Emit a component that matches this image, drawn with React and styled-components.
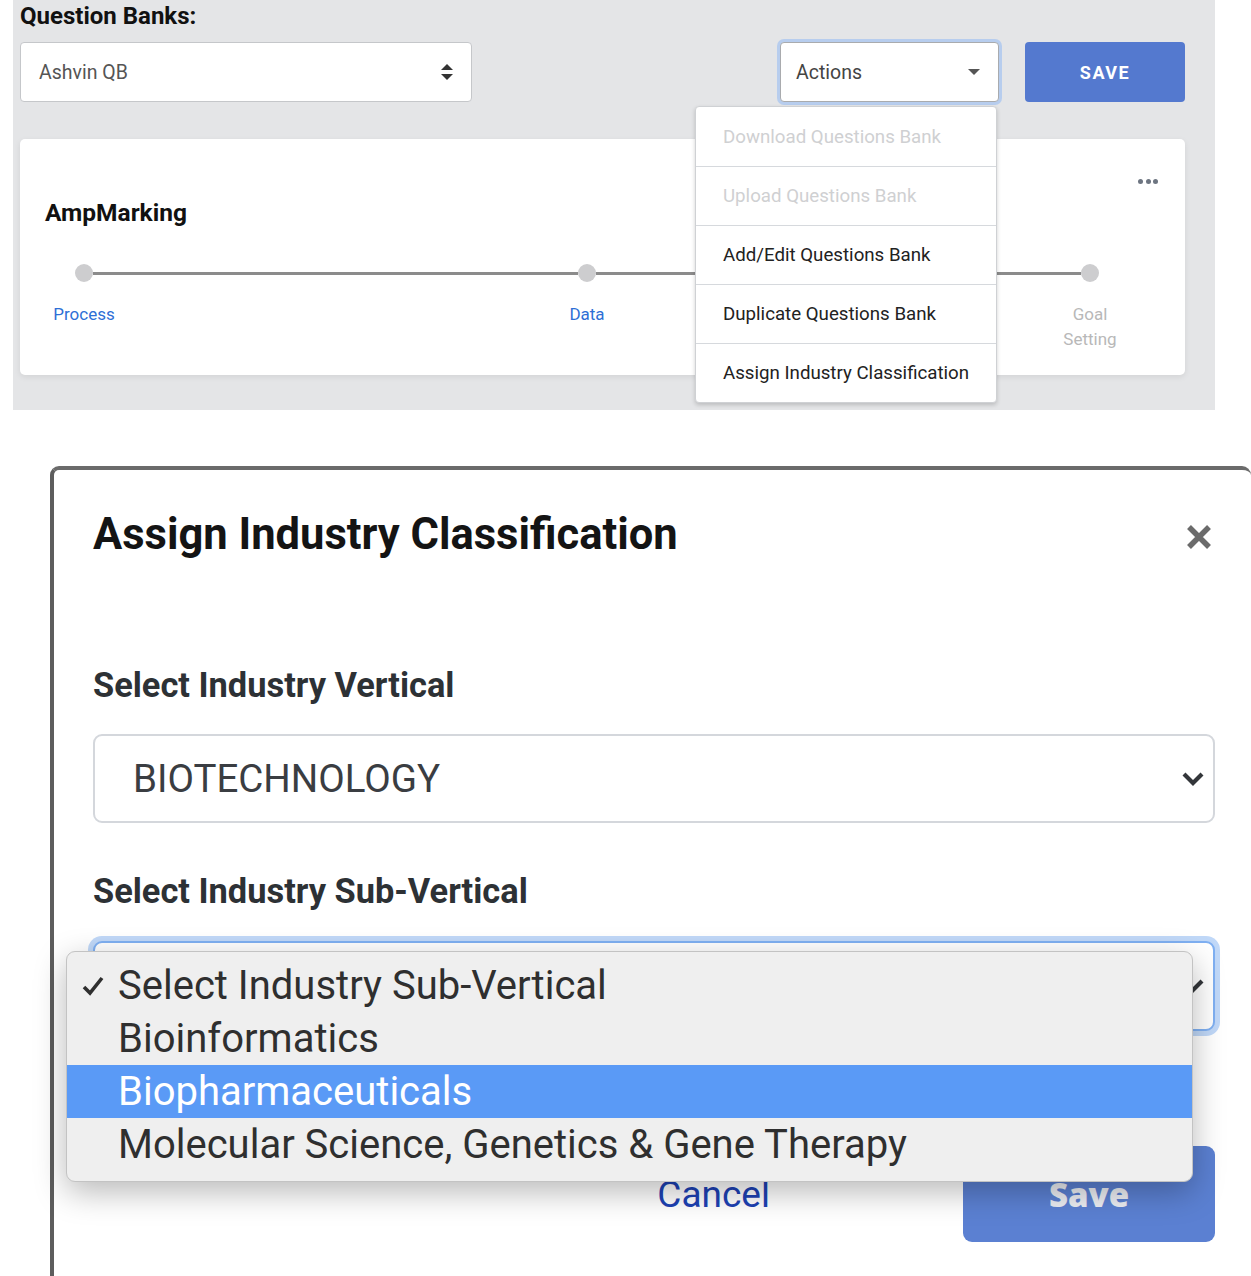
import React from "react";
import styled, { createGlobalStyle, css } from "styled-components";

const GlobalStyle = createGlobalStyle`
  html, body { margin: 0; padding: 0; background: #ffffff; }
  body { font-family: Roboto, "Liberation Sans", Arial, sans-serif; }
  * { box-sizing: border-box; }
`;

const Page = styled.div`
  width: 1251px;
  height: 1276px;
  overflow: hidden;
  background: #ffffff;
  display: flex;
  flex-direction: column;
`;

/* ---------- top panel ---------- */
const TopPanel = styled.section`
  margin-left: 13px;
  width: 1202px;
  height: 410px;
  background: #e4e5e7;
  padding: 0 30px 0 7px;
  display: flex;
  flex-direction: column;
`;

const PanelTitle = styled.h2`
  margin: 0;
  font-size: 24px;
  line-height: 32px;
  font-weight: 700;
  color: #111;
`;

const Toolbar = styled.div`
  margin-top: 10px;
  display: flex;
  align-items: center;
  height: 60px;
`;

const BankSelect = styled.div`
  width: 452px;
  height: 60px;
  background: #fff;
  border: 1px solid #c5c7ca;
  border-radius: 4px;
  display: flex;
  align-items: center;
  justify-content: space-between;
  padding: 0 18px 0 18px;
  font-size: 19.5px;
  color: #555;
`;

const Spacer = styled.div`
  flex: 1;
`;

const ActionsBox = styled.div`
  position: relative;
  width: 219px;
  height: 60px;
  background: #fff;
  border: 1px solid #a9abae;
  border-radius: 4px;
  box-shadow: 0 0 0 3px #b7cdee;
  display: flex;
  align-items: center;
  justify-content: space-between;
  padding: 0 18px 0 15px;
  font-size: 19.5px;
  color: #444;
  margin-right: 26px;
`;

const Menu = styled.ul`
  position: absolute;
  top: calc(100% + 5px);
  right: 1px;
  width: 302px;
  margin: 0;
  padding: 0;
  list-style: none;
  background: #fff;
  border: 1px solid #cfd1d4;
  border-radius: 4px;
  box-shadow: 0 2px 4px rgba(0, 0, 0, 0.18);
  z-index: 5;
`;

const MenuItem = styled.li`
  height: 59px;
  display: flex;
  align-items: center;
  padding-left: 27px;
  font-size: 18.7px;
  color: ${(p) => (p.$disabled ? "#cfd0d2" : "#222")};
  & + & {
    border-top: 1px solid #d6d9dd;
  }
`;

const PrimaryButton = styled.button`
  width: 160px;
  height: 60px;
  border: none;
  border-radius: 4px;
  background: #5479cf;
  color: #fff;
  font-family: Roboto, sans-serif;
  font-weight: 700;
  font-size: 18px;
  letter-spacing: 1.5px;
`;

const Card = styled.div`
  margin-top: 37px;
  height: 236px;
  background: #fff;
  border-radius: 5px;
  box-shadow: 0 2px 6px rgba(0, 0, 0, 0.08);
  padding: 36px 27px 0 25px;
  display: flex;
  flex-direction: column;
`;

const CardMenuRow = styled.div`
  display: flex;
  justify-content: flex-end;
  height: 12px;
  align-items: center;
`;

const Dot = styled.span`
  width: 5px;
  height: 5px;
  border-radius: 50%;
  background: #6d7581;
  & + & {
    margin-left: 2.5px;
  }
`;

const CardTitle = styled.h3`
  margin: 11px 0 0 0;
  font-size: 24.5px;
  line-height: 30px;
  font-weight: 700;
  color: #111;
`;

const Stepper = styled.div`
  margin: 36px 32px 0 3px;
  display: flex;
  align-items: flex-start;
`;

const Step = styled.div`
  width: 72px;
  display: flex;
  flex-direction: column;
  align-items: center;
`;

const StepDot = styled.span`
  width: 18px;
  height: 18px;
  border-radius: 50%;
  background: #cdcdcf;
`;

const Connector = styled.span`
  flex: 1;
  height: 3px;
  margin: 7.5px -27px 0;
  background: #8b8b8b;
`;

const StepLabel = styled.span`
  margin-top: 20px;
  font-size: 17px;
  line-height: 25px;
  text-align: center;
  color: ${(p) => (p.$muted ? "#b8b8b8" : "#2e6fd6")};
`;

/* ---------- modal ---------- */
const Modal = styled.section`
  margin-top: 56px;
  margin-left: 50px;
  width: 1201px;
  flex: 1;
  background: #fff;
  border-left: 4px solid #5d5d5d;
  border-top: 4px solid #6b6b6b;
  border-radius: 9px 9px 0 0;
  padding: 37px 36px 0 39px;
  display: flex;
  flex-direction: column;
`;

const ModalHeader = styled.div`
  display: flex;
  align-items: center;
  justify-content: space-between;
  height: 56px;
`;

const ModalTitle = styled.h1`
  margin: 0;
  font-size: 43.5px;
  line-height: 56px;
  font-weight: 700;
  color: #141414;
`;

const CloseButton = styled.button`
  border: none;
  background: none;
  padding: 0;
  margin-right: 3px;
  margin-top: 4px;
  width: 26px;
  height: 26px;
  display: flex;
`;

const FieldLabel = styled.h4`
  margin: ${(p) => p.$mt}px 0 0 0;
  font-size: 34.4px;
  line-height: 40px;
  font-weight: 700;
  color: #2d3135;
`;

const SelectBox = styled.div`
  position: relative;
  margin-top: ${(p) => p.$mt}px;
  height: ${(p) => p.$h}px;
  border: 2px solid #d4d7dc;
  border-radius: 9px;
  background: #fff;
  display: flex;
  align-items: center;
  justify-content: space-between;
  padding: 0 8px 0 38px;
  font-size: 38.5px;
  color: #3a3d42;
  ${(p) =>
    p.$focused &&
    css`
      border-color: #7fb0f2;
      box-shadow: 0 0 0 5px #c0d8f8;
    `}
`;

const OptionList = styled.ul`
  position: absolute;
  left: -29px;
  top: 8px;
  width: 1127px;
  height: 231px;
  margin: 0;
  padding: 7px 0 0 0;
  list-style: none;
  background: #efefef;
  border: 1px solid #c3c3c3;
  border-radius: 9px;
  box-shadow: 0 10px 32px rgba(0, 0, 0, 0.28);
  z-index: 10;
`;

const OptionItem = styled.li`
  height: 53px;
  display: flex;
  align-items: center;
  font-size: 40px;
  color: ${(p) => (p.$active ? "#ffffff" : "#2f2f2f")};
  background: ${(p) => (p.$active ? "#5a9af6" : "transparent")};
`;

const CheckSlot = styled.span`
  width: 51px;
  display: flex;
  justify-content: center;
`;

const Footer = styled.div`
  margin-top: 115px;
  display: flex;
  justify-content: flex-end;
  align-items: center;
  gap: 193px;
`;

const CancelLink = styled.a`
  font-size: 37px;
  color: #1d42b4;
  text-decoration: none;
`;

const SaveButton = styled.button`
  width: 252px;
  height: 96px;
  border: none;
  border-radius: 9px;
  background: #5b80d2;
  color: #eceef3;
  font-family: "Open Sans", Lato, sans-serif;
  font-weight: 800;
  font-size: 33px;
`;

const UpDownIcon = () => (
  <svg width="12" height="16" viewBox="0 0 12 16">
    <path d="M6 0 L12 6 H0 Z" fill="#333" />
    <path d="M6 16 L12 10 H0 Z" fill="#333" />
  </svg>
);

const CaretIcon = () => (
  <svg width="12" height="6" viewBox="0 0 12 6">
    <path d="M0 0 H12 L6 6 Z" fill="#555" />
  </svg>
);

const ChevronIcon = () => (
  <svg width="24" height="16" viewBox="0 0 24 16">
    <path d="M3 3 L12 12 L21 3" fill="none" stroke="#33363a" strokeWidth="4.2" />
  </svg>
);

const CloseIcon = () => (
  <svg width="26" height="26" viewBox="0 0 26 26">
    <path d="M3 3 L23 23 M23 3 L3 23" stroke="#6b6b6b" strokeWidth="5.5" />
  </svg>
);

const CheckIcon = () => (
  <svg width="24" height="24" viewBox="0 0 24 24">
    <path d="M3 13 L9 19 L21 4" fill="none" stroke="#2f2f2f" strokeWidth="3.6" />
  </svg>
);

const menuItems = [
  { label: "Download Questions Bank", disabled: true },
  { label: "Upload Questions Bank", disabled: true },
  { label: "Add/Edit Questions Bank" },
  { label: "Duplicate Questions Bank" },
  { label: "Assign Industry Classification" },
];

const options = [
  { label: "Select Industry Sub-Vertical", checked: true },
  { label: "Bioinformatics" },
  { label: "Biopharmaceuticals", active: true },
  { label: "Molecular Science, Genetics & Gene Therapy" },
];

export default function App() {
  return (
    <>
      <GlobalStyle />
      <Page>
        <TopPanel>
          <PanelTitle>Question Banks:</PanelTitle>
          <Toolbar>
            <BankSelect>
              <span>Ashvin QB</span>
              <UpDownIcon />
            </BankSelect>
            <Spacer />
            <ActionsBox>
              <span>Actions</span>
              <CaretIcon />
              <Menu>
                {menuItems.map((m) => (
                  <MenuItem key={m.label} $disabled={m.disabled}>
                    {m.label}
                  </MenuItem>
                ))}
              </Menu>
            </ActionsBox>
            <PrimaryButton>SAVE</PrimaryButton>
          </Toolbar>
          <Card>
            <CardMenuRow>
              <Dot />
              <Dot />
              <Dot />
            </CardMenuRow>
            <CardTitle>AmpMarking</CardTitle>
            <Stepper>
              <Step>
                <StepDot />
                <StepLabel>Process</StepLabel>
              </Step>
              <Connector />
              <Step>
                <StepDot />
                <StepLabel>Data</StepLabel>
              </Step>
              <Connector />
              <Step>
                <StepDot />
                <StepLabel $muted>Goal Setting</StepLabel>
              </Step>
            </Stepper>
          </Card>
        </TopPanel>

        <Modal>
          <ModalHeader>
            <ModalTitle>Assign Industry Classification</ModalTitle>
            <CloseButton aria-label="Close">
              <CloseIcon />
            </CloseButton>
          </ModalHeader>
          <FieldLabel $mt={102}>Select Industry Vertical</FieldLabel>
          <SelectBox $mt={29} $h={89}>
            <span>BIOTECHNOLOGY</span>
            <ChevronIcon />
          </SelectBox>
          <FieldLabel $mt={48}>Select Industry Sub-Vertical</FieldLabel>
          <SelectBox $mt={30} $h={90} $focused>
            <span />
            <ChevronIcon />
            <OptionList>
              {options.map((o) => (
                <OptionItem key={o.label} $active={o.active}>
                  <CheckSlot>{o.checked && <CheckIcon />}</CheckSlot>
                  {o.label}
                </OptionItem>
              ))}
            </OptionList>
          </SelectBox>
          <Footer>
            <CancelLink href="#">Cancel</CancelLink>
            <SaveButton>Save</SaveButton>
          </Footer>
        </Modal>
      </Page>
    </>
  );
}
